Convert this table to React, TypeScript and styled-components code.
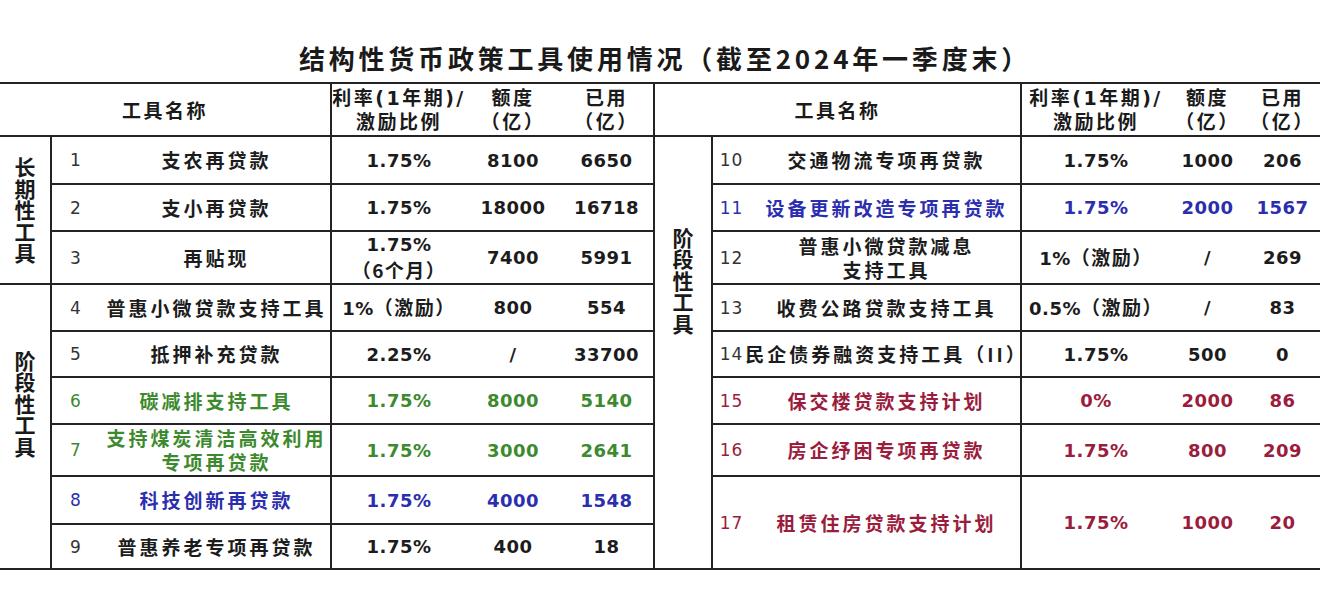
import React from 'react';
import styled, { createGlobalStyle } from 'styled-components';

const GlobalStyle = createGlobalStyle`
  html, body { margin: 0; padding: 0; background: #ffffff; }
  body { font-family: "Noto Sans CJK SC", "Noto Sans", sans-serif; color: #1c1c1c; }
`;

type Tone = 'black' | 'green' | 'blue' | 'red';

const TONES: Record<Tone, string> = {
  black: '#1c1c1c',
  green: '#3d8a2e',
  blue: '#2b2eae',
  red: '#9b1d3d',
};

const LINE = '2px solid #232323';
const CJK = '"Noto Sans CJK SC", "Noto Sans", sans-serif';
const NUM = '"DejaVu Sans", "Noto Sans CJK SC", sans-serif';

const Page = styled.div`
  width: 1320px;
`;

const Title = styled.h1`
  margin: 0;
  height: 82px;
  box-sizing: border-box;
  padding: 32px 0 0 10px;
  display: flex;
  align-items: center;
  justify-content: center;
  font: 700 26px ${CJK};
  letter-spacing: 3.8px;
  color: #1a1a1a;
`;

const Sheet = styled.div`
  display: grid;
  grid-template-columns: 52px 48px 230px 136px 94px 93px 60px 37px 270px 150px 75px 75px;
  grid-template-rows: 53px 48px 47px 53px 47px 46px 47px 52px 48px 45px;
  border-bottom: ${LINE};
`;

type Place = { $col: string; $row: string; $left?: boolean; $right?: boolean };

const Cell = styled.div<Place>`
  grid-column: ${(p) => p.$col};
  grid-row: ${(p) => p.$row};
  box-sizing: border-box;
  min-width: 0;
  border-top: ${LINE};
  border-left: ${(p) => (p.$left ? LINE : 'none')};
  border-right: ${(p) => (p.$right ? LINE : 'none')};
  display: flex;
  align-items: center;
  justify-content: center;
  text-align: center;
  white-space: nowrap;
`;

const Lines = styled.span<{ $lh?: number }>`
  display: block;
  line-height: ${(p) => p.$lh ?? 24}px;
`;

const HeadCell = styled(Cell)`
  font: 700 19px ${NUM};
  letter-spacing: 2.5px;
  color: #1a1a1a;
`;

const CategoryCell = styled(Cell)<{ $lift: number }>`
  padding-bottom: ${(p) => p.$lift}px;
`;

const VerticalText = styled.span`
  display: block;
  width: 21px;
  white-space: normal;
  word-break: break-all;
  font: 700 21px/21.6px ${CJK};
  color: #1a1a1a;
`;

const NumCell = styled(Cell)<{ $tone: Tone }>`
  font: 400 17px ${NUM};
  letter-spacing: 1px;
  color: ${(p) => (p.$tone === 'black' ? '#333333' : TONES[p.$tone])};
`;

const NameCell = styled(Cell)<{ $tone: Tone }>`
  font: 700 19px ${CJK};
  letter-spacing: 3px;
  padding-left: 3px;
  color: ${(p) => TONES[p.$tone]};
`;

const ValueCell = styled(Cell)<{ $tone: Tone }>`
  font: 700 18px ${NUM};
  letter-spacing: 0.5px;
  color: ${(p) => TONES[p.$tone]};
`;

const Han = styled.span`
  font-family: ${CJK};
  font-size: 19px;
  letter-spacing: 1.5px;
`;

interface Item {
  n: number;
  name: React.ReactNode;
  rate: React.ReactNode;
  amount: string;
  used: string;
  tone?: Tone;
  span?: number;
}

const incentive = (pct: string) => (
  <>
    {pct}
    <Han>（激励）</Han>
  </>
);

const LEFT: Item[] = [
  { n: 1, name: '支农再贷款', rate: '1.75%', amount: '8100', used: '6650' },
  { n: 2, name: '支小再贷款', rate: '1.75%', amount: '18000', used: '16718' },
  {
    n: 3,
    name: '再贴现',
    rate: (
      <>
        1.75%
        <br />
        <Han>（6个月）</Han>
      </>
    ),
    amount: '7400',
    used: '5991',
  },
  { n: 4, name: '普惠小微贷款支持工具', rate: incentive('1%'), amount: '800', used: '554' },
  { n: 5, name: '抵押补充贷款', rate: '2.25%', amount: '/', used: '33700' },
  { n: 6, name: '碳减排支持工具', rate: '1.75%', amount: '8000', used: '5140', tone: 'green' },
  {
    n: 7,
    name: (
      <>
        支持煤炭清洁高效利用
        <br />
        专项再贷款
      </>
    ),
    rate: '1.75%',
    amount: '3000',
    used: '2641',
    tone: 'green',
  },
  { n: 8, name: '科技创新再贷款', rate: '1.75%', amount: '4000', used: '1548', tone: 'blue' },
  { n: 9, name: '普惠养老专项再贷款', rate: '1.75%', amount: '400', used: '18' },
];

const RIGHT: Item[] = [
  { n: 10, name: '交通物流专项再贷款', rate: '1.75%', amount: '1000', used: '206' },
  { n: 11, name: '设备更新改造专项再贷款', rate: '1.75%', amount: '2000', used: '1567', tone: 'blue' },
  {
    n: 12,
    name: (
      <>
        普惠小微贷款减息
        <br />
        支持工具
      </>
    ),
    rate: incentive('1%'),
    amount: '/',
    used: '269',
  },
  { n: 13, name: '收费公路贷款支持工具', rate: incentive('0.5%'), amount: '/', used: '83' },
  { n: 14, name: '民企债券融资支持工具（II）', rate: '1.75%', amount: '500', used: '0' },
  { n: 15, name: '保交楼贷款支持计划', rate: '0%', amount: '2000', used: '86', tone: 'red' },
  { n: 16, name: '房企纾困专项再贷款', rate: '1.75%', amount: '800', used: '209', tone: 'red' },
  { n: 17, name: '租赁住房贷款支持计划', rate: '1.75%', amount: '1000', used: '20', tone: 'red', span: 2 },
];

function ItemRow({ item, row, first }: { item: Item; row: number; first: number }) {
  const tone = item.tone ?? 'black';
  const r = `${row} / span ${item.span ?? 1}`;
  return (
    <>
      <NumCell $col={`${first}`} $row={r} $tone={tone}>
        {item.n}
      </NumCell>
      <NameCell $col={`${first + 1}`} $row={r} $tone={tone}>
        <Lines $lh={24}>{item.name}</Lines>
      </NameCell>
      <ValueCell $col={`${first + 2}`} $row={r} $tone={tone} $left>
        <Lines $lh={25}>{item.rate}</Lines>
      </ValueCell>
      <ValueCell $col={`${first + 3}`} $row={r} $tone={tone}>
        {item.amount}
      </ValueCell>
      <ValueCell $col={`${first + 4}`} $row={r} $tone={tone}>
        {item.used}
      </ValueCell>
    </>
  );
}

function Header({ first, leftLine }: { first: number; leftLine: boolean }) {
  return (
    <>
      <HeadCell $col={`${first} / span 3`} $row="1" $left={leftLine}>
        工具名称
      </HeadCell>
      <HeadCell $col={`${first + 3}`} $row="1" $left>
        <Lines>
          利率(1年期)/
          <br />
          激励比例
        </Lines>
      </HeadCell>
      <HeadCell $col={`${first + 4}`} $row="1">
        <Lines>
          额度
          <br />
          （亿）
        </Lines>
      </HeadCell>
      <HeadCell $col={`${first + 5}`} $row="1">
        <Lines>
          已用
          <br />
          （亿）
        </Lines>
      </HeadCell>
    </>
  );
}

export default function App() {
  return (
    <Page>
      <GlobalStyle />
      <Title>结构性货币政策工具使用情况（截至2024年一季度末）</Title>
      <Sheet>
        <Header first={1} leftLine={false} />
        <Header first={7} leftLine />

        <CategoryCell $col="1" $row="2 / span 3" $right $lift={0}>
          <VerticalText>长期性工具</VerticalText>
        </CategoryCell>
        <CategoryCell $col="1" $row="5 / span 6" $right $lift={46}>
          <VerticalText>阶段性工具</VerticalText>
        </CategoryCell>
        {LEFT.map((item, i) => (
          <ItemRow key={item.n} item={item} row={i + 2} first={2} />
        ))}

        <CategoryCell $col="7" $row="2 / span 9" $left $right $lift={144}>
          <VerticalText>阶段性工具</VerticalText>
        </CategoryCell>
        {RIGHT.map((item, i) => (
          <ItemRow key={item.n} item={item} row={i + 2} first={8} />
        ))}
      </Sheet>
    </Page>
  );
}
